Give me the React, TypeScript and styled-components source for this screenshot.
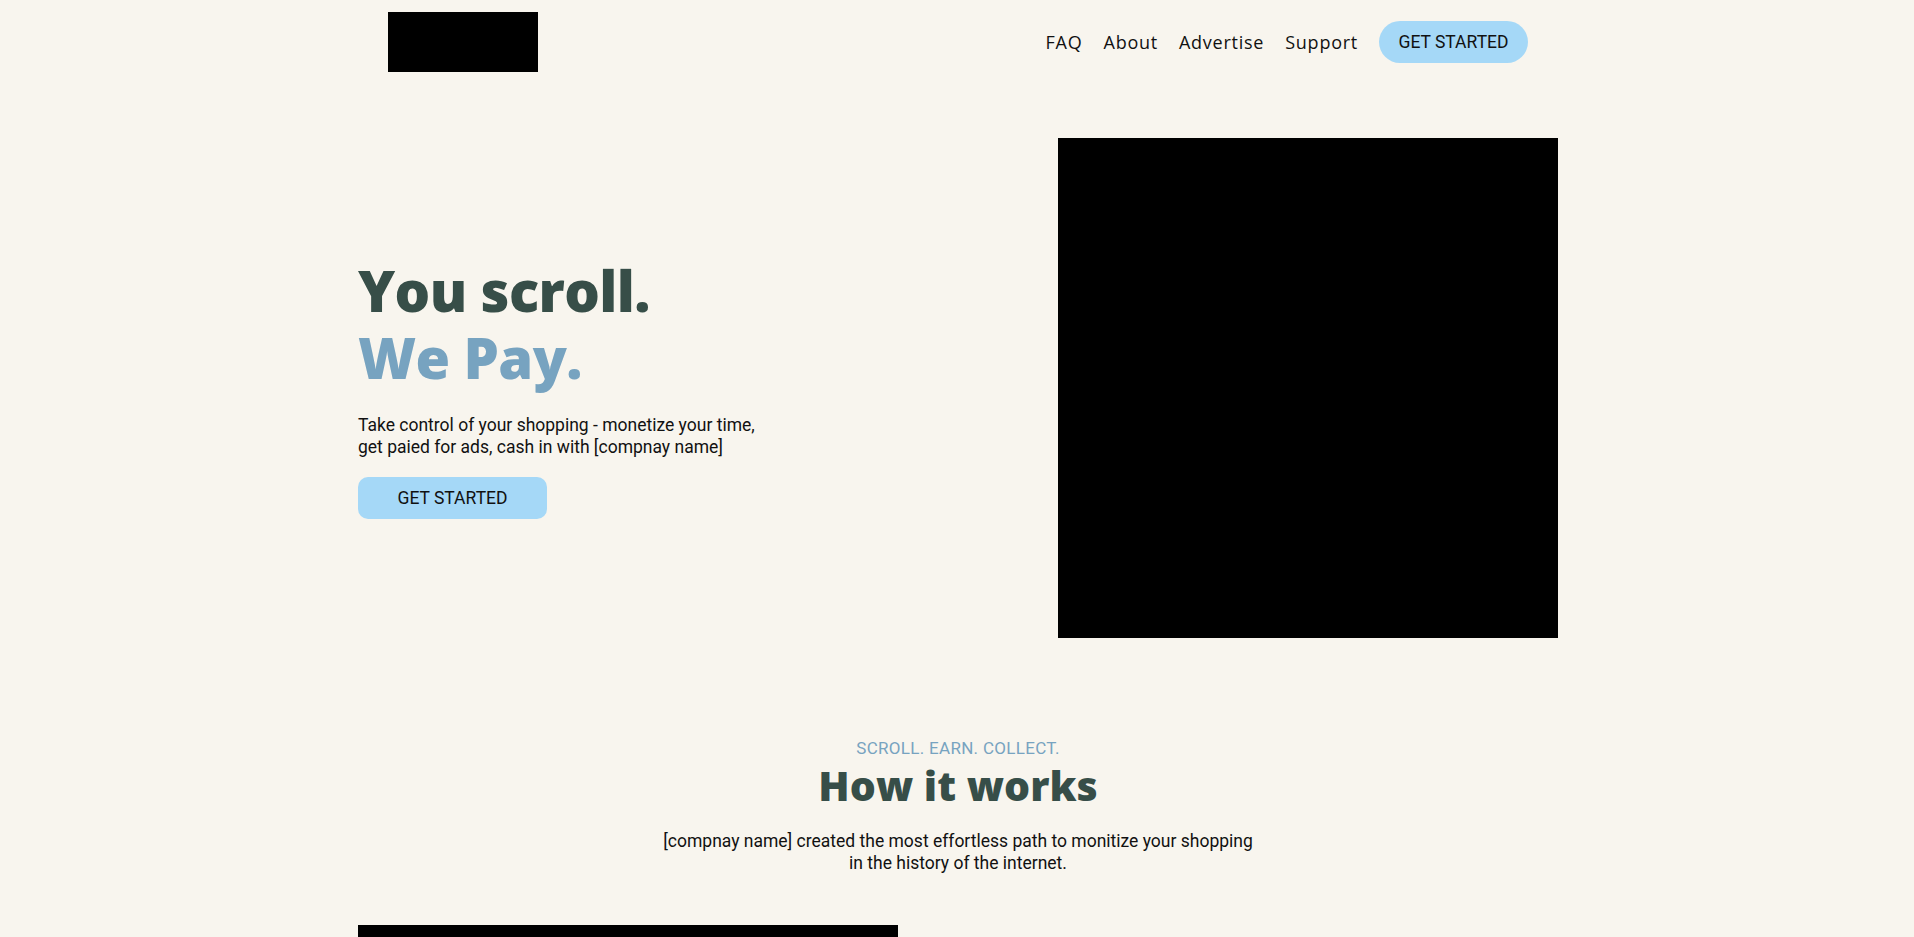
import React from "react";
import styled, { createGlobalStyle } from "styled-components";

const GlobalStyle = createGlobalStyle`
  html, body {
    margin: 0;
    padding: 0;
    background: #f8f5ee;
  }
  body {
    font-family: Roboto, "Liberation Sans", sans-serif;
    color: #111;
  }
  * { box-sizing: border-box; }
`;

const Page = styled.div`
  min-height: 100vh;
  background: #f8f5ee;
`;

const Container = styled.div`
  width: 1200px;
  margin: 0 auto;
  position: relative;
  left: 1px;
`;

const Header = styled.header`
  height: 84px;
  padding: 0 30px;
  display: flex;
  align-items: center;
  justify-content: space-between;
`;

const Logo = styled.div`
  width: 150px;
  height: 60px;
  background: #000;
`;

const Nav = styled.nav`
  display: flex;
  align-items: center;
  gap: 21px;
`;

const NavLink = styled.a`
  font-family: "Open Sans", "Liberation Sans", sans-serif;
  font-size: 18px;
  letter-spacing: 0.75px;
  color: #111;
  text-decoration: none;
`;

const PillButton = styled.button<{ $round?: boolean; $width: number }>`
  width: ${(p) => p.$width}px;
  height: 42px;
  border: none;
  border-radius: ${(p) => (p.$round ? "21px" : "10px")};
  background: #a5d8f7;
  color: #111;
  font-family: Roboto, "Liberation Sans", sans-serif;
  font-size: 17.5px;
  display: flex;
  align-items: center;
  justify-content: center;
  padding: 0;
  cursor: pointer;
`;

const Hero = styled.section`
  margin-top: 54px;
  display: flex;
  align-items: center;
  justify-content: space-between;
`;

const HeroText = styled.div`
  display: flex;
  flex-direction: column;
  align-items: flex-start;
`;

const Headline = styled.h1`
  margin: 0;
  font-family: "Open Sans", "Liberation Sans", sans-serif;
  font-weight: 800;
  font-size: 56px;
  line-height: 67px;
  letter-spacing: -0.6px;
`;

const HeadLine = styled.span<{ $tone: "dark" | "light" }>`
  display: block;
  color: ${(p) => (p.$tone === "dark" ? "#374e48" : "#77a3c0")};
`;

const Lead = styled.p`
  margin: 23px 0 19px;
  font-size: 17.5px;
  line-height: 22px;
  color: #111;
`;

const HeroImage = styled.div`
  width: 500px;
  height: 500px;
  background: #000;
`;

const HowSection = styled.section`
  margin-top: 99px;
  display: flex;
  flex-direction: column;
  align-items: center;
  text-align: center;
`;

const Eyebrow = styled.div`
  font-size: 17px;
  line-height: 22px;
  color: #77a3c0;
  letter-spacing: 0.3px;
`;

const SectionTitle = styled.h2`
  margin: 0;
  font-family: "Open Sans", "Liberation Sans", sans-serif;
  font-weight: 800;
  font-size: 41px;
  line-height: 52px;
  color: #374e48;
`;

const SectionText = styled.p`
  margin: 20px 0 0;
  font-size: 17.5px;
  line-height: 21.5px;
  color: #111;
`;

const StepRow = styled.div`
  margin-top: 51px;
  width: 100%;
  display: flex;
`;

const StepImage = styled.div`
  width: 540px;
  height: 300px;
  background: #000;
`;

export default function App() {
  return (
    <Page>
      <GlobalStyle />
      <Container>
        <Header>
          <Logo />
          <Nav>
            <NavLink href="#">FAQ</NavLink>
            <NavLink href="#">About</NavLink>
            <NavLink href="#">Advertise</NavLink>
            <NavLink href="#">Support</NavLink>
            <PillButton $round $width={149}>GET STARTED</PillButton>
          </Nav>
        </Header>
        <Hero>
          <HeroText>
            <Headline>
              <HeadLine $tone="dark">You scroll.</HeadLine>
              <HeadLine $tone="light">We Pay.</HeadLine>
            </Headline>
            <Lead>
              Take control of your shopping - monetize your time,
              <br />
              get paied for ads, cash in with [compnay name]
            </Lead>
            <PillButton $width={189}>GET STARTED</PillButton>
          </HeroText>
          <HeroImage />
        </Hero>
        <HowSection>
          <Eyebrow>SCROLL. EARN. COLLECT.</Eyebrow>
          <SectionTitle>How it works</SectionTitle>
          <SectionText>
            [compnay name] created the most effortless path to monitize your shopping
            <br />
            in the history of the internet.
          </SectionText>
          <StepRow>
            <StepImage />
          </StepRow>
        </HowSection>
      </Container>
    </Page>
  );
}
